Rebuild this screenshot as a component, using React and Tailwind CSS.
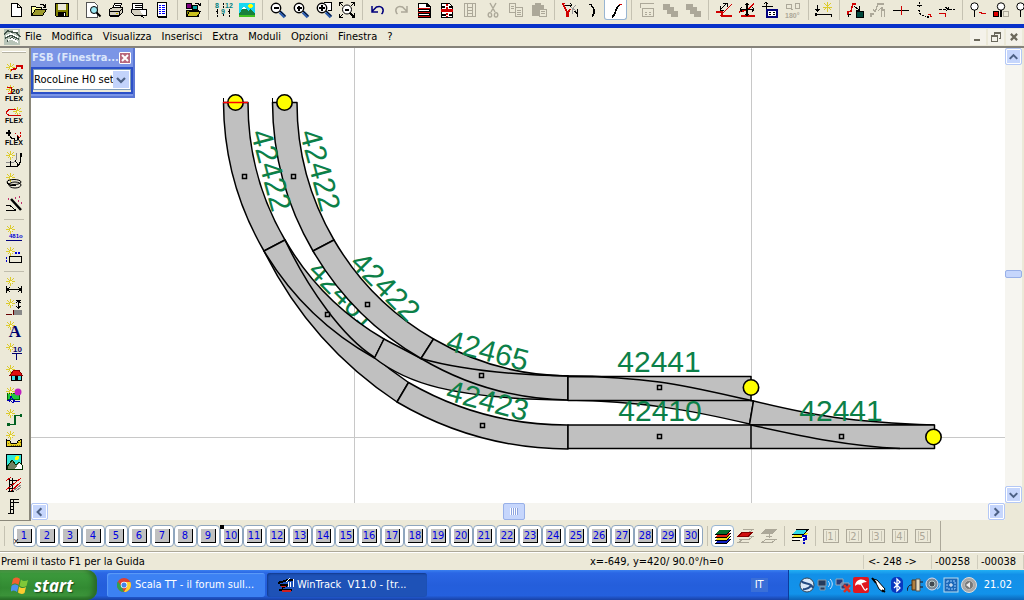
import React, { useState } from 'react';

const Icon = ({ children, size = 'h-4 w-4' }) => (
  <svg viewBox="0 0 16 16" className={`${size} shrink-0 overflow-visible`} fill="none" stroke="#000" shapeRendering="crispEdges" aria-hidden="true">
    {children}
  </svg>
);

// small yellow "new" star in the corner of the left toolbar icons
const Star = () => (
  <>
    <path d="M4.500 -1v9M0 3.500h9M1.500 .5l6 6M7.500 .5l-6 6" stroke="#dccb2c" />
    <path d="M3.500 3.500h2" stroke="#fffbc0" strokeWidth="2" />
  </>
);

const Lens = ({ children }) => (
  <>
    <circle cx="6" cy="6" r="4.700" fill="#fff" strokeWidth="1.400" shapeRendering="auto" />
    <path d="M10 10l5 5" stroke="#2c5cac" strokeWidth="3.500" shapeRendering="auto" />
    <path d="M10 9l5.500 5" stroke="#000" strokeWidth="1" shapeRendering="auto" />
    {children}
  </>
);

const Flex = () => (
  <text x="8" y="15" textAnchor="middle" fontSize="7" fontWeight="bold" fill="#000" stroke="none" fontFamily="Liberation Sans" shapeRendering="auto">FLEX</text>
);

const G = '#aca899';

const topIcons = {
  new: <path d="M3.500 1.500h6l4 4v9h-10zM9.500 1.500v4h4" fill="#fff" />,
  open: (
    <>
      <path d="M.5 13.500v-9h4l1 1h5v3" fill="#ffff9c" />
      <path d="M.5 13.500l4-6h11l-4 6z" fill="#9c9a2c" />
      <path d="M9 2.500h3l2 2M14.500 2v3h-3" />
    </>
  ),
  save: (
    <>
      <path d="M1.500 1.500h13v13h-12l-1-1z" fill="#808000" />
      <path d="M4 2h8v6h-8z" fill="#ece9d8" stroke="none" />
      <path d="M4 10h8v5h-8z" fill="#000" stroke="none" />
      <path d="M10 11h1v3h-1z" fill="#fff" stroke="none" />
    </>
  ),
  preview: (
    <>
      <path d="M1.500 .5h8l3 3v12h-11z" fill="#fff" stroke="#555" />
      <circle cx="9" cy="8" r="3.500" fill="#9ce8f4" shapeRendering="auto" />
      <path d="M11.500 10.500l4 4" strokeWidth="2" shapeRendering="auto" />
    </>
  ),
  print: (
    <>
      <path d="M4.500 6.500l2-5h7l-2 5" fill="#fff" />
      <path d="M1.500 7.500l3-2h10v5l-3 3h-10z" fill="#d4d0c0" />
      <path d="M1.500 9.500h10l3-3M11.500 9.500v4M7 3.500h5M6 5.500h5M2 14.500h9" />
      <path d="M8 11.500h2" stroke="#c8b400" />
    </>
  ),
  printSetup: (
    <>
      <path d="M1.500 1.500h10v8h-10zM4 3.500h7M4 5.500h7" fill="#fff" />
      <path d="M.5 7.500h9l3 3v3h-9l-3-3z" fill="#d4d0c0" />
      <path d="M8.500 7.500h7v6h-7l5 2" fill="#fff" />
    </>
  ),
  list: (
    <>
      <path d="M3.500 .5h9v14h-9z" fill="#fff" />
      <path d="M12.500 1v14M4 15.500h9" />
      <path d="M5 3.500h2M8 3.500h3M5 5.500h2M8 5.500h3M5 7.500h2M8 7.500h3M5 9.500h2M8 9.500h3M5 11.500h2M8 11.500h3" stroke="#00f" strokeWidth="1.500" />
    </>
  ),
  library: (
    <>
      <path d="M1.500 1.500h5v5h-5z" fill="#800080" />
      <path d="M7.500 3.500h5v4h-5z" fill="#00a0a0" />
      <path d="M10 1.500h3l2 2M15.500 1v3" />
      <path d="M1.500 14.500v-6h12v6z" fill="#808000" />
      <path d="M4.500 9.500h11l-3 5h-11z" fill="#c8c020" />
    </>
  ),
  numbers: (
    <g>
      <text x="-1" y="6" fontSize="7" fill="#008080" stroke="none" fontFamily="Liberation Sans" fontWeight="bold">8</text>
      <text x="9" y="6" fontSize="7" fill="#008080" stroke="none" fontFamily="Liberation Sans" fontWeight="bold">12</text>
      <text x="5" y="12" fontSize="7" fill="#008080" stroke="none" fontFamily="Liberation Sans" fontWeight="bold">9</text>
      <path d="M1.500 7v8M0 9.500h3M7.500 1v5M7.500 12v3M13.500 7v8M12 9.500h3" strokeDasharray="2 1" />
    </g>
  ),
  landscape: (
    <>
      <path d="M0 1h16v14h-16z" fill="#18d8f0" stroke="none" />
      <path d="M0 12l5-8 4 5 2-2 5 4v4h-16z" fill="#18803c" stroke="none" />
      <path d="M3 7l2-3 2 3z" fill="#fff" stroke="none" />
      <path d="M0 13.500h16" stroke="#40c020" strokeWidth="2" />
      <circle cx="11.500" cy="4" r="2.300" fill="#ff0" stroke="none" />
    </>
  ),
  zoomOut: <Lens><path d="M3.500 6h5" strokeWidth="2" /></Lens>,
  zoomIn: <Lens><path d="M3.500 6h5M6 3.500v5" strokeWidth="2" /></Lens>,
  zoomBox: (
    <>
      <path d="M7.500 .5h8v8h-4" fill="#fff" />
      <Lens><path d="M3 6h6M6 3v6" strokeWidth="1.500" /></Lens>
    </>
  ),
  zoomAll: (
    <>
      <path d="M.5 4v-3.500h3.500M12 .5h3.500v3.500M15.500 11v4.500h-3M4 15.500h-3.500v-4M0 0l4 4M16 0l-4 4M0 16l4-4" />
      <circle cx="8" cy="7.500" r="4.500" fill="#fff" shapeRendering="auto" />
      <path d="M6 7.500h4M11 11l4 4" strokeWidth="2" />
    </>
  ),
  undo: <path d="M2 4v6h6M2.500 9l4-4c5-2 8 2 6 6l-1 1" stroke="#00007c" strokeWidth="1.500" shapeRendering="auto" />,
  redo: <path d="M14 4v6h-6M13.500 9l-4-4c-5-2-8 2-6 6l1 1" stroke={G} strokeWidth="1.500" shapeRendering="auto" />,
  docRed: (
    <>
      <path d="M2 1h9l4 3v12h-13z" fill="#000" stroke="none" />
      <path d="M3 2h7v3h4v1h-11zM3 8h10v1h-10zM3 12h10v1h-10z" fill="#fff" stroke="none" />
      <path d="M2 6.500h12M2 10.500h12M2 14.500h12" stroke="#d00000" />
    </>
  ),
  docSplit: (
    <>
      <path d="M2.500 1.500h8l3 3v11h-11z" fill="#fff" />
      <path d="M3 4.500h3M10 4.500h4M3 12.500h4M10 12.500h4" strokeWidth="2" />
      <path d="M2 8.500h12" stroke="#d00000" strokeWidth="3" />
      <path d="M8 2v13" stroke="#d00000" strokeWidth="2" strokeDasharray="2 1" />
    </>
  ),
  docGrey: <path d="M2.500 1.500h11v13h-11zM5.500 2v12M10.500 2v12M6 5.500h4M6 8.500h4M6 11.500h4" stroke={G} strokeWidth="1.500" />,
  cut: <path d="M5 1l5 9M11 1l-5 9M6 11c-3-2-4 4-1 4s1-4 1-4M10 11c3-2 4 4 1 4s-1-4-1-4" stroke={G} strokeWidth="1.400" shapeRendering="auto" />,
  copy: <path d="M1.500 1.500h6v9h-6zM3 4.500h3M3 6.500h3M7.500 5.500h7v9h-7zM9 8.500h4M9 10.500h4M9 12.500h4" stroke={G} />,
  paste: (
    <>
      <path d="M1 3h12v11h-12zM4 1h6v3h-6z" fill={G} stroke="none" />
      <path d="M8.500 7.500h7v7h-7z" fill="#ece9d8" stroke={G} />
      <path d="M10 9.500h4M10 11.500h4" stroke={G} />
    </>
  ),
  switchRed: (
    <>
      <path d="M1 2l4 8v5M8 7l-2 4v4M0 1.500h3" stroke="#d00000" strokeWidth="1.500" />
      <path d="M3 3h7M8 1l2 2-2 2" />
      <path d="M14 3l-4 4v5M9 5l5 4" stroke="#999" />
      <path d="M15.500 7v8M13 9l2 3" strokeWidth="1.500" />
    </>
  ),
  curveLeft: <path d="M4 2.500h2l3 5v4l-2 3" strokeWidth="1.500" />,
  curveS: (
    <>
      <path d="M4 15c5-2 2-9 8-12" strokeWidth="1.700" />
      <path d="M11 2.500h3" stroke="#d00000" />
    </>
  ),
  boxOut: <path d="M1.500 1.500h13M1.500 1v5M3.500 6.500h11v8h-11zM6 10.500h2M10 10.500h2M6 12.500h2M10 12.500h2" stroke={G} />,
  stack: <path d="M1 2h6v3h4v4h4v5h-6v-3h-4v-4h-4z" fill={G} stroke={G} />,
  slope: (
    <>
      <path d="M0 10h6v4h10M4 14l12-12" stroke="#d00000" strokeWidth="1.300" />
      <path d="M4 8l7-7M4 4v4h4M7 1h4v4" />
    </>
  ),
  move: (
    <>
      <path d="M0 10l8-2 7-6M2 14h14" stroke="#d00000" strokeWidth="1.500" />
      <path d="M8 1v13M1 7.500h14M6 3l2-2 2 2M6 12l2 2 2-2M3 5l-2 2 2 3M13 5l2 2-2 3" strokeWidth="1.200" />
    </>
  ),
  grid: (
    <>
      <path d="M4.500 0v8M0 4.500h11M2 2l2-2 2 2" />
      <path d="M4.500 7.500h10v7h-10z" fill="#fff" stroke="#00007c" strokeWidth="2" />
      <path d="M7 10.500h2M11 10.500h2M7 12.500h2M11 12.500h2" />
    </>
  ),
  half: (
    <>
      <path d="M1.500 2.500h5v4h-5zM10.500 1.500h4v5h-4zM8 7.500h-2" stroke={G} strokeWidth="1.500" />
      <text x="0" y="16" fontSize="7" fontWeight="bold" fill={G} stroke="none" fontFamily="Liberation Sans">180°</text>
    </>
  ),
  newTrack: (
    <>
      <path d="M1.500 3v6M0 7l1.500 2 2-2M0 12.500h16M15.500 12v3M0 11v3" strokeWidth="1.500" />
      <path d="M11.500 0v10M7 5h9M8 1l7 7M15 1l-7 7" stroke="#dccb2c" />
    </>
  ),
  flexTo: (
    <>
      <path d="M1 13v-3l3-1 2-7h3" stroke="#d00000" strokeWidth="1.500" />
      <path d="M1 15v-3h3M7 4l5 4M12 4v4h-3" />
      <path d="M9 9h7v6h-7z" fill="#00483c" />
    </>
  ),
  flexGrey: <path d="M1 15v-3h3M3 7l2 3 3-8h6M8 9l3-3h2M11.500 9v6M14.500 9v6M11 8h4" stroke={G} strokeWidth="1.300" />,
  lineDot: (
    <>
      <path d="M0 8.500h16" />
      <path d="M8.500 4v9" stroke="#d00000" />
    </>
  ),
  corner: (
    <>
      <path d="M3.500 0v6M1 3.500h5M3 8c1 5 3 6 10 7" strokeDasharray="2 1" strokeWidth="1.500" />
      <path d="M12 12.500h2v2h2" stroke="#d00000" />
    </>
  ),
  join: (
    <>
      <path d="M0 7.500h8M10 7.500h6M6 5l3 2-3 3M9.500 5v4" strokeDasharray="3 1" />
      <path d="M0 11.500h6v3" stroke="#d00000" />
    </>
  ),
  signal: (
    <>
      <circle cx="4.500" cy="4.500" r="3.700" fill="#fff" shapeRendering="auto" />
      <path d="M4.500 8v7" strokeWidth="1.500" />
      <path d="M9 10.500h2v1h5" stroke="#d00000" />
    </>
  ),
  signalRed: (
    <>
      <circle cx="8" cy="4.500" r="3.700" fill="#fff" shapeRendering="auto" />
      <path d="M8 8v7" strokeWidth="1.500" />
      <path d="M.5 9.500h5v5h-5z" fill="#e00000" />
      <path d="M10.500 9.500h5v5h-5z" stroke={G} />
    </>
  ),
};

const topBar = [
  'new', 'open', 'save', '|', 'preview', 'print', 'printSetup', 'list', '|', 'library', '|', 'numbers', 'landscape', '|',
  'zoomOut', 'zoomIn', 'zoomBox', 'zoomAll', '|', 'undo', 'redo', 'docRed', 'docSplit', 'docGrey', 'cut', 'copy', 'paste', '|',
  'switchRed', 'curveLeft', 'curveS', '|', 'boxOut', 'stack', 'stack', '|', 'slope', 'move', 'grid', 'half', '|', 'newTrack', '|',
  'flexTo', 'flexGrey', 'lineDot', 'corner', 'join', '|', 'signal', 'signalRed', 'signal',
];

const sideIcons = {
  flex1: <><Star /><path d="M5 6l3-1h2l1-3h5v3" stroke="#d00000" strokeWidth="1.300" /><Flex /></>,
  flex20: (
    <>
      <Star />
      <path d="M1 1h4v6h-3" stroke="#d00000" />
      <text x="5" y="8" fontSize="8" fill="#000" stroke="none" fontFamily="Liberation Sans" fontWeight="bold">20°</text>
      <Flex />
    </>
  ),
  flexLoop: <><g transform="translate(7 0)"><Star /></g><path d="M15 7.500h-11c-5-1-4-6 1-6h5" stroke="#d00000" /><Flex /></>,
  flexPts: <><path d="M3 0v6M0 3h5M4 6c1 3 3 3 5 3M12 6v4" strokeWidth="1.300" /><path d="M9 3l5 5M14 2v6" stroke="#d00000" strokeDasharray="2 1" /><Flex /></>,
  bend: <><Star /><path d="M0 10.500h6c4 0 5-3 5-10" stroke="#888" /><path d="M0 14.500h9c5 0 6-4 6-14" strokeWidth="1.300" /><path d="M4 9v6M9 8l3 5" /></>,
  spiral: <><Star /><ellipse cx="8" cy="8" rx="7" ry="2.500" shapeRendering="auto" /><ellipse cx="9" cy="11" rx="6" ry="3" shapeRendering="auto" /><path d="M1 8c0 3 4 4 9 3" /></>,
  wand: <><path d="M5 3l10 11" strokeWidth="2.500" shapeRendering="auto" /><path d="M0 9.500h4l6 5M0 14.500h9" /><path d="M9 2h1M13 1h1M12 5h1M15 7h1M2 3h1" stroke="#c0306c" strokeWidth="2" /></>,
  nums: (
    <>
      <Star />
      <text x="3" y="12" fontSize="6" fill="#0000d0" stroke="none" fontFamily="Liberation Sans" fontWeight="bold">481o</text>
      <path d="M0 14.500h16" stroke="#00007c" />
    </>
  ),
  rect: <><Star /><path d="M3.500 8.500h12v6h-12z" /><path d="M.5 9v5M9 5h5" stroke="#0000d0" strokeWidth="1.500" strokeDasharray="2 1" /></>,
  dist: <><Star /><path d="M.5 8v7M15.500 8v7M1 11.500h14M4 9l-3 2.500 3 2.500M12 9l3 2.500-3 2.500" /></>,
  height: <><Star /><path d="M12.500 1v7M10 3l2.500-2 2 2M10 6l2.500 2 2-2M10 .5h5" /><path d="M7 10h9v5h-9z" fill="#888" stroke="none" /><path d="M0 14.500h6M7 10v5" stroke="#600" /></>,
  text: (
    <>
      <text x="9" y="15" textAnchor="middle" fontSize="17" fontWeight="bold" fill="#00006c" stroke="none" fontFamily="Liberation Serif" shapeRendering="auto">A</text>
      <Star />
    </>
  ),
  ten: (
    <>
      <Star />
      <text x="7" y="8" fontSize="8" fontWeight="bold" fill="#00006c" stroke="none" fontFamily="Liberation Sans">10</text>
      <path d="M6 9.500h10M10.500 10v6" stroke="#00006c" strokeWidth="1.500" />
    </>
  ),
  house: <><Star /><path d="M5.500 8.500h10v6h-10z" fill="#40e0e8" /><path d="M4 9l4-5h5l3 5z" fill="#e01010" stroke="#800" /><path d="M9 10h3v5h-3z" fill="#000" stroke="none" /></>,
  scene: <><path d="M1 5h12v6h-12z" fill="#20c840" stroke="#060" /><circle cx="12" cy="4" r="3.500" fill="#c020c0" stroke="none" shapeRendering="auto" /><Star /><path d="M1 12h3l3 3 2-3M3 14l2-6 3 5h6" stroke="#0000b0" /></>,
  zig: <><Star /><path d="M2 14.500h7v-9h6" stroke="#006020" strokeWidth="1.300" /><path d="M1 13h3v3h-3zM14 4h2v3h-2z" fill="#006020" stroke="none" /></>,
  terrain: <><path d="M.5 8v6.500h15v-7l-3 1-2 3h-5l-2-3z" fill="#e8d020" /><path d="M2 11h3M5 13h9M12 10h3" stroke="#807000" strokeDasharray="1 1" /><Star /></>,
  mountain: <><path d="M.5 .5h15v15h-15z" fill="#30e8d8" /><path d="M1 13l5-7 4 5 3-3 3 3v4h-15z" fill="#708060" stroke="#030" /><path d="M9 15l4-6 3 3v3z" fill="#fff" stroke="none" /><circle cx="11" cy="4" r="2" fill="#ff0" stroke="none" /></>,
  noTower: <><path d="M3.500 2v13M6.500 2v13M3 4.500h10M3 8.500h5M3 12.500h4M2 15.500h6" strokeWidth="1.300" /><path d="M0 5l5-4M0 14l15-12M5 15l10-9" stroke="#d00000" /><path d="M7 15l8-6M10 15l5-4" stroke="#888" /></>,
  tower: <path d="M4.500 1v14M7.500 1v14M4 1.500h9M4 4.500h9M4 8.500h4M4 11.500h4M2 15.500h6" strokeWidth="1.200" />,
};

const sideBar = [
  'flex1', 'flex20', 'flexLoop', 'flexPts', 'bend', 'spiral', 'wand', '-', 'nums', 'rect', '-',
  'dist', 'height', 'text', 'ten', 'house', 'scene', 'zig', 'terrain', 'mountain', 'noTower', 'tower',
];

const menus = ['File', 'Modifica', 'Visualizza', 'Inserisci', 'Extra', 'Moduli', 'Opzioni', 'Finestra', '?'];

const TopToolbar = () => (
  <div className="flex h-6 shrink-0 items-start overflow-hidden pl-1">
    {topBar.map((name, i) =>
      name === '|' ? (
        <span key={i} className="h-5 w-2 shrink-0 px-1">
          <span className="block h-full w-px bg-[#c5c2b2]" />
        </span>
      ) : (
        <button
          key={i}
          aria-label={name}
          className={`flex h-5 w-[23px] shrink-0 items-center justify-center ${
            name === 'curveS' ? 'rounded-b-[3px] border border-t-0 border-[#98b5d2] bg-white' : ''
          }`}
        >
          <Icon>{topIcons[name]}</Icon>
        </button>
      )
    )}
  </div>
);

const MenuBar = () => (
  <div className="flex h-[18px] shrink-0 items-center">
    <span className="flex w-6 justify-center">
      <Icon>
        <path d="M0 0h16v16h-16z" fill="#b8c4b8" stroke="none" />
        <path d="M0 5l4-3 9 2 3 4M1 9l6-3 8 4M3 12l5-3 6 4" stroke="#405048" strokeWidth="1.500" />
        <path d="M2 7l5-2 7 3M4 11l4-1 6 3M9 2h5" stroke="#fff" strokeWidth="1.500" />
      </Icon>
    </span>
    <nav className="flex flex-1 pb-px">
      {menus.map(m => (
        <button key={m} className="pr-[9px] pl-px text-black">{m}</button>
      ))}
    </nav>
    <div className="flex gap-[2px] pr-[2px]">
      <button aria-label="Minimize" className="flex h-4 w-4 items-center justify-center bg-[#f4f2ea]">
        <Icon size="h-3 w-3"><path d="M3 12h8" stroke="#6b685c" strokeWidth="2.500" /></Icon>
      </button>
      <button aria-label="Restore" className="flex h-4 w-4 items-center justify-center bg-[#f4f2ea]">
        <Icon size="h-[10px] w-[10px]"><path d="M5 5v-4h10v9h-3M5 2h10M1 6h10v9h-10zM1 7h10" stroke="#6b685c" strokeWidth="1.700" /></Icon>
      </button>
      <button aria-label="Close" className="flex h-4 w-4 items-center justify-center bg-[#f4f2ea]">
        <Icon size="h-[10px] w-[10px]"><path d="M3 3l10 10M13 3l-10 10" stroke="#6b685c" strokeWidth="3.500" shapeRendering="auto" /></Icon>
      </button>
    </div>
  </div>
);

const SideToolbar = () => (
  <div className="flex w-[31px] shrink-0 flex-col items-center overflow-hidden border-r-2 border-b border-[#8a877a] pr-px">
    <span className="mt-[3px] mb-2 h-[2px] w-6 border-b border-[#b5b2a2] bg-white" />
    {sideBar.map((name, i) =>
      name === '-' ? (
        <span key={i} className="h-2 w-5 shrink-0 pt-1">
          <span className="block h-px bg-[#c0bdad]" />
        </span>
      ) : (
        <button key={i} aria-label={name} className="flex h-[22px] w-6 shrink-0 items-center justify-center">
          <Icon>{sideIcons[name]}</Icon>
        </button>
      )
    )}
  </div>
);

const Chevron = ({ dir }) => {
  const d = {
    up: 'M4 10l4-4 4 4',
    down: 'M4 6l4 4 4-4',
    left: 'M10 4l-4 4 4 4',
    right: 'M6 4l4 4-4 4',
  }[dir];
  return (
    <svg viewBox="0 0 16 16" className="h-4 w-4" fill="none" stroke="#4d6185" strokeWidth="2.200" aria-hidden="true">
      <path d={d} />
    </svg>
  );
};

const ScrollButton = ({ dir }) => (
  <button
    aria-label={`Scroll ${dir}`}
    className="flex h-[17px] w-[17px] shrink-0 items-center justify-center rounded-[2px] border border-[#b4c8f6] bg-[#c6d6fc] shadow-[inset_0_0_0_1px_white]"
  >
    <Chevron dir={dir} />
  </button>
);

const squares = [
  [244, 176], [293, 176], [367, 304], [327, 314], [481, 375], [482, 425], [659, 387], [659, 436], [841, 436],
];

const ends = [[235.5, 102.5], [284.5, 102.5], [751, 387.5], [933.5, 437]];

const Label = ({ x, y, angle = 0, children }) => (
  <text
    transform={`translate(${x} ${y}) rotate(${angle})`}
    y="11"
    textAnchor="middle"
    fontSize="30"
    fill="#0c8048"
    fontFamily="Liberation Sans"
  >
    {children}
  </text>
);

const TrackPlan = () => (
  <svg className="block h-full w-full" aria-label="Track plan">
    <g transform="translate(-31 -48)">
      <path d="M354.500 0v600M751.500 0v600M0 437.500h1024" stroke="#c8c8c8" />
      <g fill="#c0c0c0" stroke="#000" strokeWidth="1.500" strokeLinejoin="round">
        {/* outer curve */}
        <path d="M264 251A388 388 0 0 0 397 402L408.500 382.500A364 364 0 0 1 285 240z" />
        <path d="M397 402A341 341 0 0 0 568 449V425A317 317 0 0 1 408.500 382.500z" />
        <path d="M223.500 102.500A298 298 0 0 0 264 251L285 240A273 273 0 0 1 248 102.500z" />
      </g>
      <Label x={344} y={294} angle={45}>42461</Label>
      <g fill="#c0c0c0" stroke="#000" strokeWidth="1.500" strokeLinejoin="round">
        {/* branch between the two curves */}
        <path d="M264 251A297 297 0 0 0 374.500 358L384 339A273 273 0 0 1 285 240z" />
        <path d="M285 240Q303 278 327 310T374 357" fill="none" />
        <path d="M374.500 358C405 382 450 399 568 400V376Q475 374 421 358.500L384 339z" />
        {/* inner curve */}
        <path d="M272.500 102.500A297.500 297.500 0 0 0 313 251L334 240A273 273 0 0 1 297 102.500z" />
        <path d="M313 251A297.500 297.500 0 0 0 421 358.500L433.500 339A273 273 0 0 1 334 240z" />
        <path d="M421 358.500A297.500 297.500 0 0 0 568 400V376A273 273 0 0 1 433.500 339z" />
        <path d="M421 358.500Q475 374 568 376" fill="none" />
        {/* straights and turnouts */}
        <path d="M568 400C640 401 690 410 749.500 424L753.500 401C690 387 650 376 568 376z" />
        <path d="M568 376.500h183v24h-183z" />
        <path d="M568 376.500C650 376 690 387 753.500 401" fill="none" />
        <path d="M753.500 401C815 416 850 422 934 425H749.500z" />
        <path d="M568 425h183v23.500h-183zM751 425h183.500v23.500h-183.500z" />
        <path d="M751 425C810 438 850 446 900 448.500" fill="none" />
      </g>
      <Label x={272} y={170} angle={75}>42422</Label>
      <Label x={321} y={170} angle={75}>42422</Label>
      <Label x={386} y={286} angle={45}>42422</Label>
      <Label x={488} y={350} angle={15}>42465</Label>
      <Label x={488} y={400} angle={15}>42423</Label>
      <Label x={659} y={361}>42441</Label>
      <Label x={660} y={410}>42410</Label>
      <Label x={841} y={410}>42441</Label>
      {squares.map(([x, y]) => (
        <rect key={`${x}-${y}`} x={x - 1.5} y={y - 1.5} width="4" height="4" fill="#c0c0c0" stroke="#000" strokeWidth="1.500" />
      ))}
      <path d="M223.500 98v5M272.500 98v5" stroke="#000" />
      {ends.map(([x, y]) => (
        <circle key={x} cx={x} cy={y} r="7.700" fill="#ff0" stroke="#000" strokeWidth="1.600" />
      ))}
      <path d="M223 102.500h25" stroke="#f00" strokeWidth="1.500" />
    </g>
  </svg>
);

const FsbWindow = () => (
  <div className="absolute top-0 left-0 w-[104px] border-2 border-t-0 border-l-0 border-[#5b77d4] bg-[#7b95e6] pb-[2px]">
    <div className="flex h-[19px] items-center justify-between pr-[3px] pl-px">
      <span className="text-[11px] font-bold whitespace-nowrap text-[#dbe6fb]">FSB (Finestra...</span>
      <button aria-label="Close FSB" className="flex h-3 w-3 shrink-0 items-center justify-center rounded-[1px] border border-white bg-[#b8687c]">
        <Icon size="h-2 w-2"><path d="M2 2l12 12M14 2l-12 12" stroke="#fff" strokeWidth="4" shapeRendering="auto" /></Icon>
      </button>
    </div>
    <div className="border-2 border-[#2c50c8] bg-[#ece9d8] pb-[2px]">
      <div className="relative flex border border-[#7f9db9] bg-white">
        <select
          aria-label="Track library"
          className="h-[19px] w-full appearance-none overflow-hidden pr-4 pl-0 text-black outline-none"
        >
          <option>RocoLine H0 set</option>
        </select>
        <span className="pointer-events-none absolute top-px right-px flex h-[17px] w-4 items-center justify-center bg-[#c3d3fb]">
          <Chevron dir="down" />
        </span>
      </div>
    </div>
  </div>
);

const Workspace = () => (
  <div className="flex min-h-0 flex-1">
    <SideToolbar />
    <div className="flex min-w-0 flex-1 flex-col pb-px">
      <div className="flex min-h-0 flex-1">
        <div className="relative min-w-0 flex-1 overflow-hidden bg-white">
          <TrackPlan />
          <FsbWindow />
        </div>
        <div className="flex w-[17px] flex-col bg-[#f6f5f0]">
          <ScrollButton dir="up" />
          <span className="flex-[204]" />
          <span className="h-2 rounded-[2px] border border-[#98b0e8] bg-[#c6d6fc]" />
          <span className="flex-[207]" />
          <ScrollButton dir="down" />
        </div>
        <span className="w-[2px]" />
      </div>
      <div className="flex pr-[19px]">
        <div className="flex flex-1 bg-[#f6f5f0]">
          <ScrollButton dir="left" />
          <span className="flex-[454]" />
          <span className="flex w-[22px] items-center justify-center gap-px rounded-[2px] border border-[#98b0e8] bg-[#c6d6fc]">
            {[0, 1, 2, 3].map(n => (
              <i key={n} className="h-[7px] w-px bg-white shadow-[1px_0_0_#8ca4e0]" />
            ))}
          </span>
          <span className="flex-[463]" />
          <ScrollButton dir="right" />
        </div>
      </div>
    </div>
  </div>
);

const Separator = () => (
  <span className="h-5 w-2 shrink-0 pl-1">
    <span className="block h-full w-px bg-[#c5c2b2]" />
  </span>
);

const Layers = ({ colors }) => (
  <Icon>
    {colors.map((c, i) => (
      <path key={i} d={`M4 ${11 - i * 3}h12l-4 4h-12z`} fill={c} stroke="none" />
    ))}
    <path d="M0 6h12l4-4M0 9h12l4-4M0 12h12l4-4M0 15h12l4-4" />
  </Icon>
);

const LayerBar = () => {
  const [active, setActive] = useState(10);

  return (
    <div className="flex h-[31px] shrink-0 items-center overflow-hidden border-b border-[#aca899] pl-1">
      <span className="mr-2 h-5 w-px bg-[#c5c2b2]" />
      {Array.from({ length: 30 }, (_, i) => i + 1).map(n => (
        <button
          key={n}
          onClick={() => setActive(n)}
          className="flex h-[22px] w-[23px] shrink-0 items-center justify-center rounded-[4px] border border-[#8fa6be] bg-white"
        >
          <span className="relative flex h-[14px] w-[15px] items-center justify-center border-r border-b border-black bg-[#c0c0c0] text-[#0000e0]">
            {n}
            {n === active && <i className="absolute -top-1 -left-1 h-1 w-1 bg-black" />}
            {n === 1 && <i className="absolute -bottom-1 -left-1 text-[8px] leading-none text-black not-italic">×</i>}
          </span>
        </button>
      ))}
      <Separator />
      <button aria-label="All layers" className="flex h-[22px] w-[23px] items-center justify-center rounded-[4px] border border-[#98b5d2] bg-white">
        <Layers colors={['#1020c0', '#f0e020', '#e02010', '#087030']} />
      </button>
      <button aria-label="Active layer" className="flex h-[22px] w-[23px] items-center justify-center">
        <Icon>
          <path d="M5 1.500h10l-4 3M5 8.500h10l-4 3h-10M5 11.500l-5 3h11" stroke={G} />
          <path d="M4 4.500h10l-4 4h-10z" fill="#d01010" stroke="#800" />
        </Icon>
      </button>
      <button aria-label="Move to layer" className="flex h-[22px] w-[23px] items-center justify-center">
        <Icon>
          <path d="M5 1.500h10l-4 4h-10z" fill={G} stroke={G} />
          <path d="M8 6v4M5 8.500h6M5 11.500h10l-4 3h-10z" stroke={G} />
        </Icon>
      </button>
      <Separator />
      <button aria-label="Layer info" className="flex h-[22px] w-[23px] items-center justify-center">
        <Icon>
          <path d="M4 8h12l-4 4h-12z" fill="#fff" stroke="none" />
          <path d="M4 5h12l-4 4h-12z" fill="#f0e820" stroke="none" />
          <path d="M4 2h12l-4 4h-12z" fill="#30d8e8" stroke="none" />
          <path d="M4 1.500h12l-4 4.500h-12M0 9h10M0 12h8" />
          <path d="M10 8h4v3h-2v2M11 15h2" stroke="#0000c0" strokeWidth="2" />
        </Icon>
      </button>
      <Separator />
      {[1, 2, 3, 4, 5].map(n => (
        <button key={n} disabled className="flex h-[22px] w-[23px] items-center justify-center text-[#aca899]">
          <span className="flex h-[14px] w-4 items-center justify-center border border-[#aca899] leading-none">
            <span className="flex h-[10px] w-[10px] items-center justify-center border-x border-[#c8c5b5]">{n}</span>
          </span>
        </button>
      ))}
      <span className="ml-[6px] h-full w-px bg-[#aca899]" />
    </div>
  );
};

const StatusBar = () => (
  <div className="grid h-[18px] shrink-0 grid-cols-[1fr_273px_68px_46px_47px] items-center border-t border-white pl-px text-black">
    <span>Premi il tasto F1 per la Guida</span>
    <span>x=-649, y=420/ 90.0°/h=0</span>
    <span className="border-l border-[#d0cdbd] pl-1">&lt;- 248 -&gt;</span>
    <span className="border-l border-[#d0cdbd] pl-[3px]">-00258</span>
    <span className="border-x border-[#d0cdbd] pl-[3px]">-00038</span>
  </div>
);

const tray = [
  <><circle cx="8" cy="8" r="7" fill="#d8e8f8" stroke="#345" /><path d="M2 4c4 4 10 1 12 7M4 12c3 1 6-1 8-3" stroke="#234a80" strokeWidth="2" /></>,
  <><path d="M1 3h8v6h-8zM3 10h5v3h-5z" fill="#253c5c" stroke="#89a" /><path d="M11 4c2 2 2 4 0 6M13 2c3 3 3 7 0 10" stroke="#cfe4ff" /></>,
  <><path d="M1 2h7v6h-7zM6 6h8v6h-8z" fill="#283c78" stroke="#9ab" /><path d="M9 8l6 7M15 8l-6 7" stroke="#e03020" strokeWidth="2.500" /></>,
  <><rect x="0" y="0" width="16" height="16" rx="2" fill="#e01820" stroke="none" /><path d="M2 9c0-6 7-9 12-4-3 0-5 1-7 3-2-1-4 0-5 1z" fill="#fff" stroke="none" /><path d="M8 7l3 5c1 2 3 1 3-1" stroke="#fff" strokeWidth="1.300" /></>,
  <><path d="M2 2l4 1 8 9-2 3-4-3-3-6z" fill="#fff" /><path d="M1 1l4 5M11 13l3 2" strokeWidth="2" /></>,
  <><rect x="2" y="0" width="12" height="16" rx="5" fill="#0838c0" stroke="none" /><path d="M5 5l6 6-3 3v-12l3 3-6 6" stroke="#fff" strokeWidth="1.300" /></>,
  <><path d="M5 3h4v10h-4z" fill="#b08040" stroke="#531" /><path d="M9 2h4v12h-4z" fill="#e8dcc0" stroke="#555" /><path d="M13 5h3M13 10h3M0 14c1-6 3-6 5-6" stroke="#211" /></>,
  <><circle cx="7" cy="7" r="6" fill="#7c8894" stroke="#dde" /><circle cx="7" cy="7" r="3" fill="#404850" stroke="#bcc" /><path d="M12 12c3-1 3-4 3-6" stroke="#cde" /></>,
  <><rect x="1" y="1" width="14" height="14" fill="#1c68b8" stroke="#bde" /><path d="M4 4h8v8h-8z" stroke="#9cf" strokeDasharray="2 1" /><path d="M6 8h4M8 6v4" stroke="#fff" /></>,
  <><circle cx="8" cy="8" r="7.500" fill="#a8a8a8" stroke="#ddd" /><circle cx="8" cy="8" r="4.500" fill="#787878" stroke="#bbb" /><path d="M5 8l4-3v6z" fill="#eee" stroke="none" /></>,
];

const Taskbar = () => (
  <div className="flex h-[30px] shrink-0 items-stretch bg-[linear-gradient(#3a80f0_0%,#2a66e4_10%,#245edb_50%,#2460de_85%,#1941a5_100%)] text-[11px] whitespace-nowrap text-white">
    <button className="flex w-[97px] items-center gap-[5px] rounded-r-[10px] bg-[linear-gradient(#5eac56_0%,#3c9a3c_12%,#328a32_60%,#3c943a_85%,#256e25_100%)] pl-[11px] shadow-[inset_-4px_0_5px_#2a6a28]">
      <svg viewBox="0 0 18 18" className="h-[18px] w-[18px]" aria-hidden="true">
        <path d="M2 3c2-2 5-2 7 0l-1.500 6c-2-2-5-2-7 0z" fill="#f06030" />
        <path d="M10 3.500c2 2 5 2 7 .5l-1.500 6c-2 1.500-5 1.500-7-.5z" fill="#80c838" />
        <path d="M.5 10c2-2 5-2 7 0l-1.500 6c-2-2-4.500-2-6.500 0z" fill="#4c90f0" />
        <path d="M8 10.500c2 2 5 2 7 .5l-1.500 6c-2 1.500-4.500 1-6.500-.5z" fill="#fccc30" />
      </svg>
      <span className="font-['Open_Sans',sans-serif] text-[17px] leading-none font-bold italic [text-shadow:1px_1px_1px_#1c501c]">start</span>
    </button>
    <div className="flex min-w-0 flex-1 items-center gap-[2px] pl-[10px]">
      <button className="flex h-6 w-[158px] items-center gap-[4px] overflow-hidden rounded-[3px] bg-[#3c81f3] pl-[10px] shadow-[inset_1px_1px_1px_#5c9cf8]">
        <svg viewBox="0 0 16 16" className="h-[14px] w-[14px] shrink-0" aria-hidden="true">
          <circle cx="8" cy="8" r="8" fill="#e04030" />
          <path d="M1 4l4 5 3 7A8 8 0 0 1 1 4z" fill="#30a050" />
          <path d="M8 4.500h7.200A8 8 0 0 1 8 16l3.500-6z" fill="#fcd030" />
          <circle cx="8" cy="8" r="3.700" fill="#fff" />
          <circle cx="8" cy="8" r="2.900" fill="#4484e8" />
        </svg>
        <span>Scala TT - il forum sull...</span>
      </button>
      <button className="flex h-6 w-[160px] items-center gap-[3px] overflow-hidden rounded-[3px] bg-[#1e52b7] pl-[11px] shadow-[inset_1px_1px_2px_#123a8c]">
        <Icon>
          <path d="M0 6l10-3h6M2 8h8M1 13h13M4 11l6-3" stroke="#000" strokeWidth="2" />
          <path d="M3 9.500h5M4 14h9" stroke="#d02020" strokeWidth="1.500" />
          <path d="M8 5l4-4M10 5v5M12.500 5v5M15 2v8" stroke="#fff" />
        </Icon>
        <span className="whitespace-pre">WinTrack  V11.0 - [tr...</span>
      </button>
    </div>
    <button className="mr-[20px] w-[17px] self-center bg-[#3a6fd8] text-center">IT</button>
    <div className="flex items-center gap-[2px] border-l border-[#0c3c9c] bg-[linear-gradient(#22b0f4_0%,#1290e8_15%,#1292ea_80%,#0c66b8_100%)] pr-3 pl-[10px]">
      {tray.map((icon, i) => (
        <svg key={i} viewBox="0 0 16 16" className="h-4 w-4" fill="none" stroke="#000" aria-hidden="true">{icon}</svg>
      ))}
      <time className="pl-[5px]">21.02</time>
    </div>
  </div>
);

const App = () => (
  <div className="flex h-screen min-h-0 flex-col overflow-hidden bg-[#ece9d8] font-['DejaVu_Sans_Condensed','DejaVu_Sans',sans-serif] text-[11px] leading-[14px]">
    <TopToolbar />
    <div className="h-1 shrink-0 bg-[#0831c9]" />
    <MenuBar />
    <div className="h-[2px] shrink-0 bg-[#85827a]" />
    <Workspace />
    <LayerBar />
    <StatusBar />
    <Taskbar />
  </div>
);

export default App;
